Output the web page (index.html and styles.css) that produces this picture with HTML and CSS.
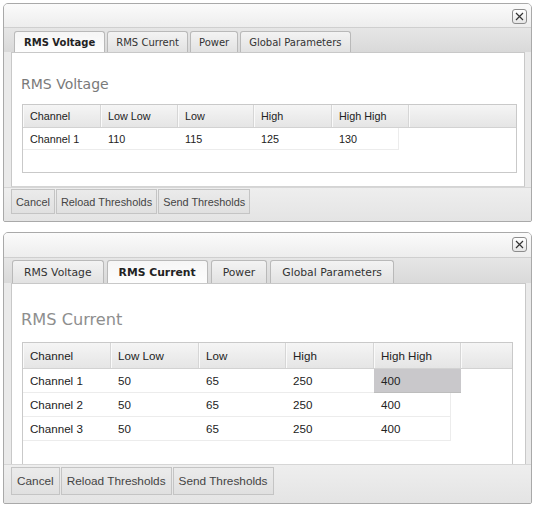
FILE: index.html
```html
<!DOCTYPE html>
<html>
<head>
    <meta charset="utf-8" />
    <title>Thresholds</title>
    <link rel="stylesheet" href="styles.css">
</head>
<body>
    <!-- voltage dialog -->
    <div class="dlg dlg-a">
        <div class="titlebar">
            <span class="close"><svg width="9" height="9" viewBox="0 0 9 9"><path d="M1 1L8 8M8 1L1 8" stroke="#333" stroke-width="1.2" fill="none" /></svg></span>
        </div>
        <div class="tabs">
            <span class="tab on">RMS Voltage</span>
            <span class="tab">RMS Current</span>
            <span class="tab">Power</span>
            <span class="tab">Global Parameters</span>
        </div>
        <div class="panel">
            <h2 class="ttl">RMS Voltage</h2>
            <div class="grid">
                <div class="hrow">
                    <span class="c1">Channel</span><span class="c2">Low Low</span><span class="c3">Low</span><span class="c4">High</span><span class="c5">High High</span><span class="fill"></span>
                </div>
                <div class="row">
                    <span class="c1">Channel 1</span><span class="c2">110</span><span class="c3">115</span><span class="c4">125</span><span class="c5 last">130</span>
                </div>
            </div>
        </div>
        <div class="foot">
            <button class="btn">Cancel</button>
            <button class="btn">Reload Thresholds</button>
            <button class="btn">Send Thresholds</button>
        </div>
    </div>

    <!-- current dialog -->
    <div class="dlg dlg-b">
        <div class="titlebar">
            <span class="close"><svg width="9" height="9" viewBox="0 0 9 9"><path d="M1 1L8 8M8 1L1 8" stroke="#333" stroke-width="1.2" fill="none" /></svg></span>
        </div>
        <div class="tabs">
            <span class="tab">RMS Voltage</span>
            <span class="tab on">RMS Current</span>
            <span class="tab">Power</span>
            <span class="tab">Global Parameters</span>
        </div>
        <div class="panel">
            <h2 class="ttl">RMS Current</h2>
            <div class="grid">
                <div class="hrow">
                    <span class="c1">Channel</span><span class="c2">Low Low</span><span class="c3">Low</span><span class="c4">High</span><span class="c5">High High</span><span class="fill"></span>
                </div>
                <div class="row">
                    <span class="c1">Channel 1</span><span class="c2">50</span><span class="c3">65</span><span class="c4">250</span><span class="c5 sel">400</span>
                </div>
                <div class="row">
                    <span class="c1">Channel 2</span><span class="c2">50</span><span class="c3">65</span><span class="c4">250</span><span class="c5 last">400</span>
                </div>
                <div class="row">
                    <span class="c1">Channel 3</span><span class="c2">50</span><span class="c3">65</span><span class="c4">250</span><span class="c5 last">400</span>
                </div>
            </div>
        </div>
        <div class="foot">
            <button class="btn">Cancel</button>
            <button class="btn">Reload Thresholds</button>
            <button class="btn">Send Thresholds</button>
        </div>
    </div>
</body>
</html>
```
FILE: styles.css
```css
* {
    box-sizing: border-box;
}

body {
    margin: 0;
    padding: 3px 0 0 3px;
    background: #fff;
    font-family: "Liberation Sans", Arial, sans-serif;
    color: #222;
}

.dlg {
    width: 529px;
    border: 1px solid #a9a9a9;
    border-radius: 5px 5px 2px 2px;
    background: #eaeaea;
    display: flex;
    flex-direction: column;
    overflow: hidden;
}

.dlg-a {
    height: 219px;
}

.dlg-b {
    height: 272px;
    margin-top: 10px;
}

.titlebar {
    display: flex;
    justify-content: flex-end;
    align-items: flex-start;
    background: linear-gradient(#fbfbfb, #ededed);
    padding: 5px 4px 0 0;
}

.dlg-a .titlebar {
    height: 23px;
}

.dlg-b .titlebar {
    height: 24px;
    padding-top: 4px;
}

.close {
    width: 15px;
    height: 15px;
    border: 1px solid #8c8c8c;
    border-radius: 3px;
    background: linear-gradient(#ffffff, #e6e6e6);
    display: flex;
    align-items: center;
    justify-content: center;
}

.tabs {
    display: flex;
    align-items: flex-end;
    border-top: 1px solid #cfcfcf;
    background: linear-gradient(#e6e6e6, #d9d9d9);
    font-family: "DejaVu Sans", Verdana, sans-serif;
    color: #333;
}

.dlg-a .tabs {
    height: 25px;
    gap: 2px;
    padding-left: 10px;
    font-size: 10px;
}

.dlg-b .tabs {
    height: 26px;
    gap: 3px;
    padding-left: 8px;
    font-size: 10.8px;
}

.tab {
    display: flex;
    align-items: center;
    border: 1px solid #b9b9b9;
    border-bottom: none;
    border-radius: 3px 3px 0 0;
    background: linear-gradient(#f3f3f3, #e2e2e2);
    white-space: nowrap;
}

.dlg-a .tab {
    height: 21px;
    padding: 1px 8px 0;
}

.dlg-a .tab.on {
    padding: 1px 9px 0;
}

.dlg-b .tab {
    height: 23px;
    padding: 1px 11px 0;
}

.tab.on {
    font-weight: bold;
    color: #222;
    background: linear-gradient(#f6f6f6, #fdfdfd);
}

.dlg-b .tab.on {
    padding: 1px 11px 0;
}

.panel {
    background: #fff;
    border: 1px solid #c8c8c8;
    border-bottom: none;
    margin: 0 6px 0 7px;
}

.dlg-a .panel {
    height: 135px;
    border-bottom: 1px solid #d4d4d4;
}

.dlg-b .panel {
    height: 181px;
    margin-right: 5px;
}

.ttl {
    margin: 0;
    font-family: "DejaVu Sans", Verdana, sans-serif;
    font-weight: normal;
    color: #7a7a7a;
    padding-left: 9px;
}

.dlg-a .ttl {
    font-size: 14px;
    line-height: 17px;
    padding-top: 23px;
    margin-bottom: 11px;
}

.dlg-b .ttl {
    font-size: 16.2px;
    line-height: 19px;
    padding-top: 26px;
    margin-bottom: 13px;
    color: #8e8e8e;
}

.grid {
    margin-left: 10px;
    border: 1px solid #c9c9c9;
    color: #222;
}

.dlg-a .grid {
    width: 495px;
    height: 69px;
    font-size: 10.8px;
}

.dlg-b .grid {
    width: 491px;
    height: 122px;
    border-bottom: none;
    font-size: 11.6px;
}

.hrow,
.row {
    display: flex;
}

.hrow {
    background: linear-gradient(#f5f5f5, #e5e5e5);
    border-bottom: 1px solid #d2d2d2;
}

.dlg-a .hrow {
    height: 23px;
}

.dlg-b .hrow {
    height: 26px;
}

.hrow span,
.row span {
    display: flex;
    align-items: center;
    padding-left: 7px;
    white-space: nowrap;
}

.hrow span {
    border-right: 1px solid #d6d6d6;
    box-shadow: inset 1px 0 0 #fafafa;
}

.hrow .fill {
    flex: 1;
    border-right: none;
}

.row span {
    border-bottom: 1px solid #ececec;
    background: #fff;
}

.dlg-a .row {
    height: 22px;
}

.dlg-b .row {
    height: 24px;
}

.dlg-a .c1 { width: 78px; }
.dlg-a .c2 { width: 77px; }
.dlg-a .c3 { width: 76px; }
.dlg-a .c4 { width: 78px; }
.dlg-a .c5 { width: 77px; }
.dlg-a .c5.last { width: 67px; border-right: 1px solid #ececec; }

.dlg-b .c1 { width: 88px; }
.dlg-b .c2 { width: 88px; }
.dlg-b .c3 { width: 87px; }
.dlg-b .c4 { width: 88px; }
.dlg-b .c5 { width: 87px; }
.dlg-b .c5.last { width: 77px; border-right: 1px solid #ececec; }

.row .sel {
    background: #c9c8cb;
    border-bottom-color: #bdbdbd;
}

.foot {
    flex: 1;
    display: flex;
    background: linear-gradient(#eeeeee, #e4e4e4);
    border-top: 1px solid #d6d6d6;
    padding-left: 7px;
}

.dlg-a .foot {
    padding-top: 1px;
    gap: 1px;
}

.dlg-b .foot {
    padding-top: 2px;
    gap: 1px;
}

.btn {
    font-family: "Liberation Sans", Arial, sans-serif;
    color: #444;
    background: linear-gradient(#ebebeb, #e0e0e0);
    border: 1px solid #c4c4c4;
    border-radius: 0;
    padding: 0 4px;
}

.dlg-a .btn {
    height: 25px;
    font-size: 10.9px;
}

.dlg-b .btn {
    height: 28px;
    font-size: 11.8px;
    padding: 0 5px;
}
```
